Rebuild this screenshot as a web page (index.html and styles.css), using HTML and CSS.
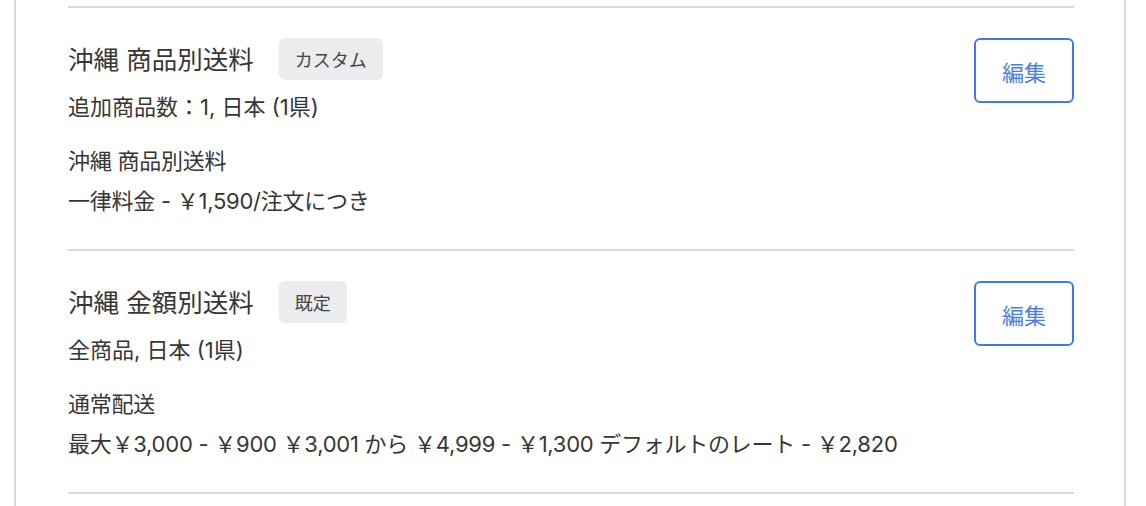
FILE: index.html
```html
<!DOCTYPE html>
<html lang="ja">
<head>
    <meta charset="UTF-8">
    <meta name="viewport" content="width=device-width, initial-scale=1.0">
    <title>配送料</title>
    <link rel="stylesheet" href="styles.css">
</head>
<body>
    <div class="card">
        <section class="profile">
            <div class="profile-info">
                <div class="profile-head">
                    <h2>沖縄 商品別送料</h2>
                    <span class="badge">カスタム</span>
                </div>
                <p class="scope">追加商品数：1, 日本 (1県)</p>
                <div class="rates">
                    <p>沖縄 商品別送料</p>
                    <p>一律料金 - ￥1,590/注文につき</p>
                </div>
            </div>
            <button class="edit-btn">編集</button>
        </section>

        <section class="profile">
            <div class="profile-info">
                <div class="profile-head">
                    <h2>沖縄 金額別送料</h2>
                    <span class="badge">既定</span>
                </div>
                <p class="scope">全商品, 日本 (1県)</p>
                <div class="rates">
                    <p>通常配送</p>
                    <p>最大￥3,000 - ￥900 ￥3,001 から ￥4,999 - ￥1,300 デフォルトのレート - ￥2,820</p>
                </div>
            </div>
            <button class="edit-btn">編集</button>
        </section>
    </div>
</body>
</html>
```

FILE: styles.css
```css
* {
    margin: 0;
    padding: 0;
    box-sizing: border-box;
}

body {
    font-family: "Inter", "Noto Sans CJK JP", sans-serif;
    background: #fff;
    color: #363636;
}

.card {
    margin-left: 14px;
    width: 1112px;
    min-height: 100vh;
    padding: 6px 50px 12px 52px;
    border-left: 2px solid #d8dadd;
    border-right: 2px solid #d8dadd;
}

.profile {
    display: flex;
    justify-content: space-between;
    align-items: flex-start;
    padding: 30px 0 28px;
    border-top: 2px solid #d8dadd;
}

.profile:last-child {
    border-bottom: 2px solid #d8dadd;
}

.profile-head {
    display: flex;
    align-items: center;
    height: 42px;
}

.profile-head h2 {
    margin-bottom: 4px;
    font-size: 25.5px;
    font-weight: 400;
}

.badge {
    margin-left: 25px;
    height: 42px;
    padding: 0 16px;
    display: flex;
    align-items: center;
    background-color: #ebecee;
    border-radius: 6px;
    font-size: 18px;
    color: #444;
}

.scope {
    margin-top: 11px;
    font-size: 22px;
    line-height: 32px;
}

/* tarifs */
.rates {
    margin-top: 18px;
    font-size: 22px;
    line-height: 40px;
    letter-spacing: -0.25px;
}

.edit-btn {
    width: 100px;
    height: 65px;
    background: #fff;
    border: 2px solid #3f7be6;
    border-radius: 6px;
    color: #4a7fe0;
    font-family: inherit;
    font-size: 22px;
    cursor: pointer;
}
```
